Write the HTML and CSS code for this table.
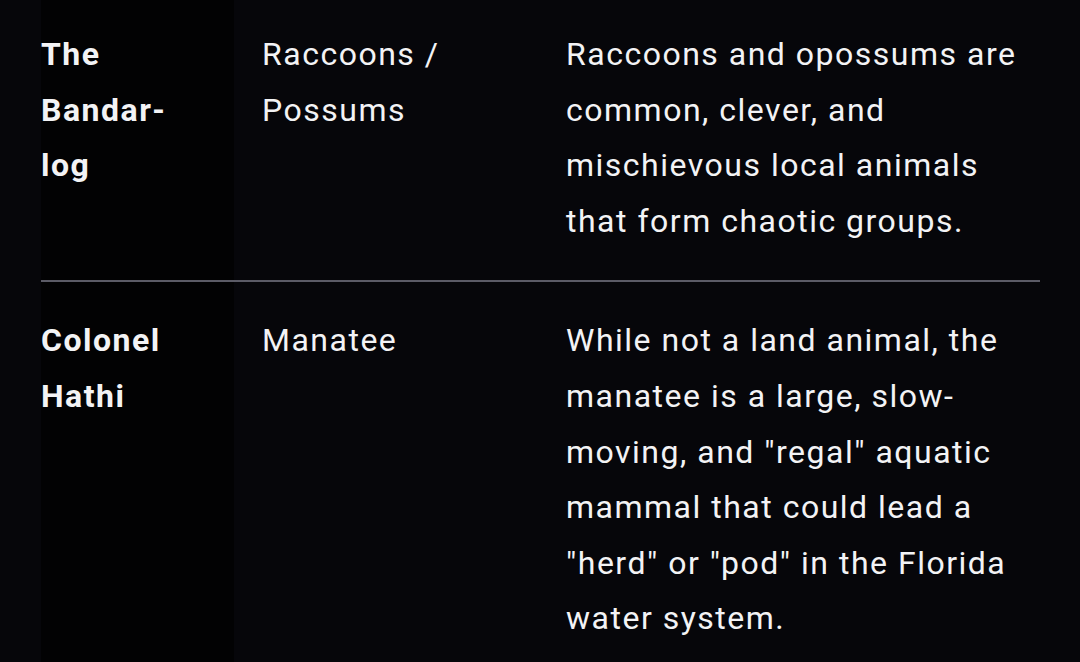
FILE: index.html
```html
<!DOCTYPE html>
<html lang="en">
<head>
<meta charset="utf-8">
<title>Characters</title>
<link rel="stylesheet" href="styles.css">
</head>
<body>
<div class="page">
  <table class="cast">
    <colgroup>
      <col class="col-name">
      <col class="col-animal">
      <col class="col-desc">
    </colgroup>
    <tbody>
      <tr class="row">
        <td class="cell name">The Bandar-log</td>
        <td class="cell">Raccoons / Possums</td>
        <td class="cell desc">Raccoons and opossums are common, clever, and mischievous local animals that form chaotic groups.</td>
      </tr>
      <tr class="row">
        <td class="cell name">Colonel Hathi</td>
        <td class="cell">Manatee</td>
        <td class="cell desc">While not a land animal, the manatee is a large, slow-moving, and "regal" aquatic mammal that could lead a "herd" or "pod" in the Florida water system.</td>
      </tr>
    </tbody>
  </table>
</div>
</body>
</html>
```

FILE: styles.css
```css
html, body {
  margin: 0;
  padding: 0;
  background: #06060a;
  height: 100%;
  overflow: hidden;
}

.page {
  padding: 0 40px 0 41px;
  margin-top: -4px;
  font-family: Roboto, "Liberation Sans", sans-serif;
  color: #f3f3f5;
}

.cast {
  width: 999px;
  table-layout: fixed;
  border-collapse: collapse;
  font-size: 32px;
  line-height: 55.6px;
  letter-spacing: 1.5px;
}

.col-name { width: 193px; }
.col-animal { width: 304px; }
.col-desc { width: 502px; }

.row + .row .cell {
  border-top: 2px solid #5b5b66;
}

.cell {
  vertical-align: top;
  text-align: left;
  padding: 31px 28px 31px 28px;
  font-weight: 400;
}

.name {
  padding-left: 0;
  font-weight: 700;
  background: #020203;
}

.desc {
  padding-right: 0;
}
```
